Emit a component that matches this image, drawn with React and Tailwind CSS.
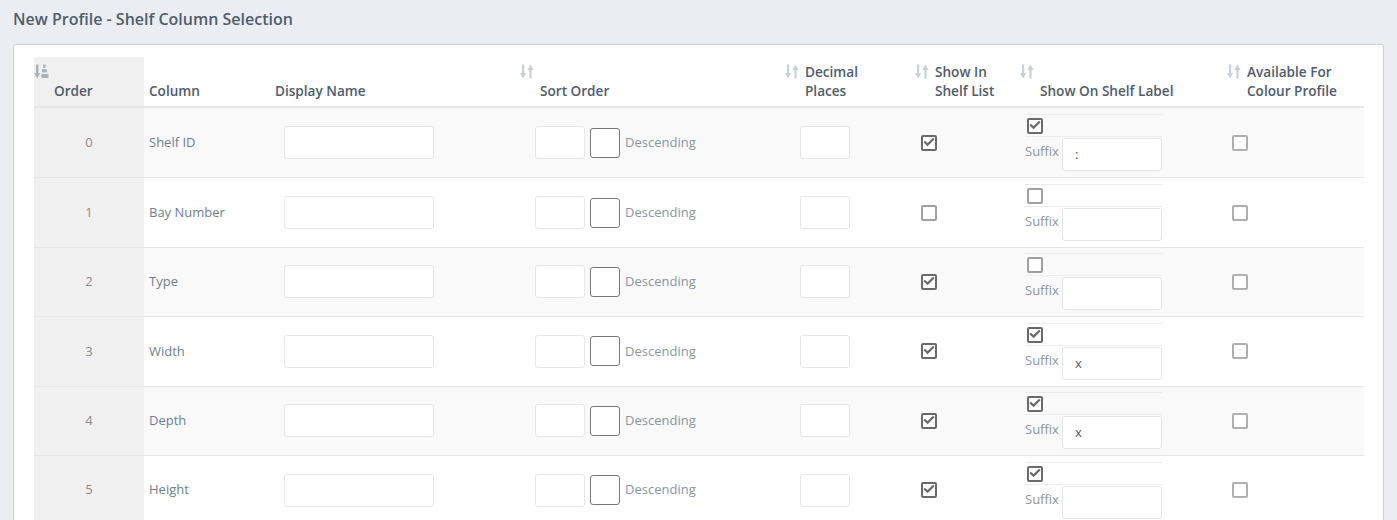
import React from "react";

const SortIcon = () => (
  <svg width="14" height="15" viewBox="0 0 14 15" className="block">
    <g fill="#c9d1d8">
      <rect x="2" y="0.5" width="2.2" height="10" />
      <polygon points="0,9 6.2,9 3.1,14.5" />
      <rect x="9.4" y="4.5" width="2.2" height="10" />
      <polygon points="7.4,6 13.6,6 10.5,0.5" />
    </g>
  </svg>
);

const OrderIcon = () => (
  <svg width="15" height="15" viewBox="0 0 15 15" className="block">
    <g fill="#aab3bc">
      <rect x="2" y="0.5" width="2.4" height="10" />
      <polygon points="0,9 6.4,9 3.2,14.5" />
      <rect x="9" y="0.5" width="2.6" height="3.2" />
      <rect x="8" y="5.2" width="4.8" height="3.2" />
      <rect x="7.4" y="10" width="7" height="4" />
    </g>
  </svg>
);

const Check = ({ checked, light }) => (
  <div
    className={
      "w-[16px] h-[16px] rounded-[2px] border-2 flex items-center justify-center bg-white " +
      (checked ? "border-[#6a6a6a]" : light ? "border-[#b0b0b0]" : "border-[#a0a0a0]")
    }
  >
    {checked && (
      <svg width="12" height="12" viewBox="0 0 12 12" className="block -mt-[2px]">
        <path d="M2 6.2 L4.6 8.6 L10 3.2" stroke="#6a6a6a" strokeWidth="2.2" fill="none" strokeLinecap="square" />
      </svg>
    )}
  </div>
);

const Input = ({ className, value }) => (
  <div
    className={
      "h-[33px] bg-white border border-[#e6e6e6] rounded-[3px] flex items-center pl-[12px] text-[13px] text-[#555] " +
      className
    }
  >
    {value}
  </div>
);

const Head = ({ icon, children, w, pl, order }) => (
  <div className={"flex h-[49px] " + w + " " + pl + (order ? " bg-[#f0f0f0]" : "")}>
    {icon !== undefined && <div className="w-[20px] shrink-0 pt-[7px]">{icon}</div>}
    <div className="self-end pb-[6px] leading-[19px] text-[13.6px] font-semibold text-[#4f5c6b]">{children}</div>
  </div>
);

const rows = [
  { o: 0, name: "Shelf ID", showIn: true, showOn: true, suffix: ":" },
  { o: 1, name: "Bay Number", showIn: false, showOn: false, suffix: "" },
  { o: 2, name: "Type", showIn: true, showOn: false, suffix: "" },
  { o: 3, name: "Width", showIn: true, showOn: true, suffix: "x" },
  { o: 4, name: "Depth", showIn: true, showOn: true, suffix: "x" },
  { o: 5, name: "Height", showIn: true, showOn: true, suffix: "" },
];

export default function App() {
  return (
    <div
      className="min-h-[520px] bg-[#eaeef3] px-[13px] pt-[8px]"
      style={{ fontFamily: '"Open Sans", "Noto Sans", sans-serif' }}
    >
      <h1 className="text-[16px] leading-[22px] font-semibold text-[#505d6b] mb-[14px]">
        New Profile - Shelf Column Selection
      </h1>
      <div className="bg-white border border-[#c8d2d8] rounded-[3px] pt-[12px] px-[20px] pb-[20px]">
        <div className="w-[1330px]">
          <div className="flex border-b-2 border-[#e6e6e6]">
            <Head icon={<OrderIcon />} w="w-[110px]" pl="pl-0" order>
              Order
            </Head>
            <Head w="w-[126px]" pl="pl-[5px]">Column</Head>
            <Head w="w-[245px]" pl="pl-[5px]">Display Name</Head>
            <Head icon={<SortIcon />} w="w-[265px]" pl="pl-[5px]">
              <div className="w-[80px]">Sort Order</div>
            </Head>
            <Head icon={<SortIcon />} w="w-[130px]" pl="pl-[5px]">
              Decimal
              <br />
              Places
            </Head>
            <Head icon={<SortIcon />} w="w-[105px]" pl="pl-[5px]">
              Show In
              <br />
              Shelf List
            </Head>
            <Head icon={<SortIcon />} w="w-[207px]" pl="pl-[5px]">
              <div className="w-[150px]">Show On Shelf Label</div>
            </Head>
            <Head icon={<SortIcon />} w="w-[142px]" pl="pl-[5px]">
              Available For
              <br />
              Colour Profile
            </Head>
          </div>
          {rows.map((r, i) => (
            <div
              key={r.o}
              className={
                "flex items-stretch h-[69.4px] text-[13px] " +
                (i > 0 ? "border-t border-[#e6e6e6] " : "") +
                (i % 2 === 0 ? "bg-[#f9f9f9]" : "bg-white")
              }
            >
              <div className="w-[110px] bg-[#f0f0f0] flex items-center justify-center text-[#8a8a8a]">{r.o}</div>
              <div className="w-[126px] pl-[5px] flex items-center text-[#6f7f8f]">{r.name}</div>
              <div className="w-[245px] pl-[14px] flex items-center">
                <Input className="w-[150px]" />
              </div>
              <div className="w-[265px] pl-[20px] flex items-center">
                <Input className="w-[50px]" />
                <div className="w-[30px] h-[30px] ml-[5px] border border-[#777] rounded-[3px] bg-white" />
                <span className="ml-[5px] text-[#8a95a1]">Descending</span>
              </div>
              <div className="w-[130px] pl-[20px] flex items-center">
                <Input className="w-[50px]" />
              </div>
              <div className="w-[105px] pl-[11px] flex items-center">
                <Check checked={r.showIn} />
              </div>
              <div className="w-[207px] pl-[10px] flex items-center">
                <div className="w-[137px]">
                  <div className="border-t border-b border-[#ececec] h-[23px] pt-[3px] pl-[2px]">
                    <Check checked={r.showOn} />
                  </div>
                  <div className="flex items-start">
                    <span className="w-[37px] pt-[5px] leading-[18px] text-[#8a95a1]">Suffix</span>
                    <Input className="w-[100px] h-[32px] mt-[1px]" value={r.suffix} />
                  </div>
                </div>
              </div>
              <div className="w-[142px] pl-[10px] flex items-center">
                <Check checked={false} light />
              </div>
            </div>
          ))}
        </div>
      </div>
    </div>
  );
}
